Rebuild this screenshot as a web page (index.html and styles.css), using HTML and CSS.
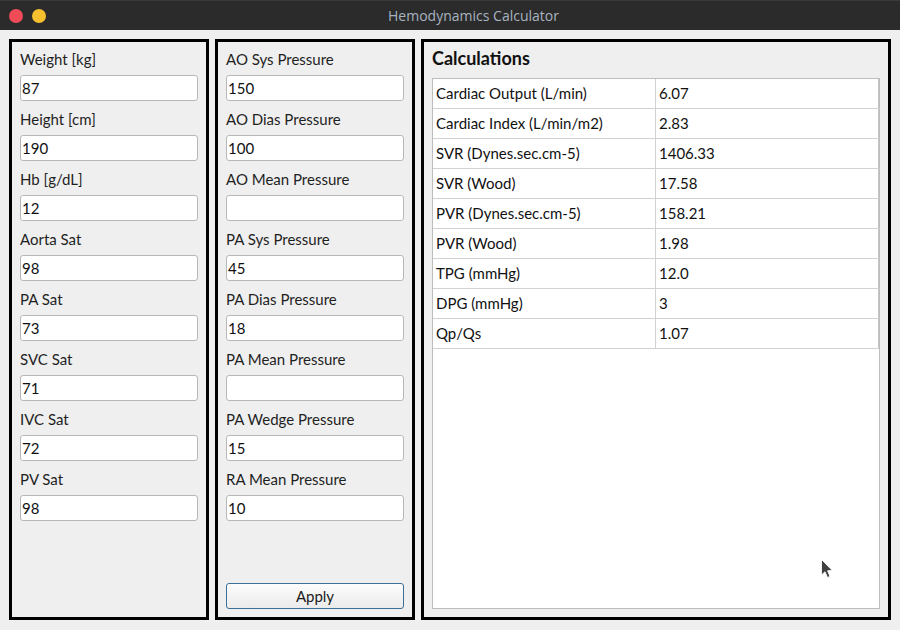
FILE: index.html
```html
<!DOCTYPE html>
<html>
<head>
<meta charset="utf-8">
<title>Hemodynamics Calculator</title>
<link rel="stylesheet" href="styles.css">
</head>
<body>
<div class="window">
  <div class="titlebar">
    <span class="dot red"></span>
    <span class="dot yellow"></span>
    <div class="title">Hemodynamics Calculator</div>
  </div>
  <div class="main">
    <div class="panel narrow">
      <div class="label">Weight [kg]</div><div class="input">87</div>
      <div class="label">Height [cm]</div><div class="input">190</div>
      <div class="label">Hb [g/dL]</div><div class="input">12</div>
      <div class="label">Aorta Sat</div><div class="input">98</div>
      <div class="label">PA Sat</div><div class="input">73</div>
      <div class="label">SVC Sat</div><div class="input">71</div>
      <div class="label">IVC Sat</div><div class="input">72</div>
      <div class="label">PV Sat</div><div class="input">98</div>
    </div>
    <div class="panel narrow">
      <div class="label">AO Sys Pressure</div><div class="input">150</div>
      <div class="label">AO Dias Pressure</div><div class="input">100</div>
      <div class="label">AO Mean Pressure</div><div class="input"></div>
      <div class="label">PA Sys Pressure</div><div class="input">45</div>
      <div class="label">PA Dias Pressure</div><div class="input">18</div>
      <div class="label">PA Mean Pressure</div><div class="input"></div>
      <div class="label">PA Wedge Pressure</div><div class="input">15</div>
      <div class="label">RA Mean Pressure</div><div class="input">10</div>
      <div class="button">Apply</div>
    </div>
    <div class="panel wide">
      <div class="heading">Calculations</div>
      <div class="table">
        <div class="row"><div class="cell">Cardiac Output (L/min)</div><div class="cell">6.07</div></div>
        <div class="row"><div class="cell">Cardiac Index (L/min/m2)</div><div class="cell">2.83</div></div>
        <div class="row"><div class="cell">SVR (Dynes.sec.cm-5)</div><div class="cell">1406.33</div></div>
        <div class="row"><div class="cell">SVR (Wood)</div><div class="cell">17.58</div></div>
        <div class="row"><div class="cell">PVR (Dynes.sec.cm-5)</div><div class="cell">158.21</div></div>
        <div class="row"><div class="cell">PVR (Wood)</div><div class="cell">1.98</div></div>
        <div class="row"><div class="cell">TPG (mmHg)</div><div class="cell">12.0</div></div>
        <div class="row"><div class="cell">DPG (mmHg)</div><div class="cell">3</div></div>
        <div class="row"><div class="cell">Qp/Qs</div><div class="cell">1.07</div></div>
      </div>
    </div>
  </div>
  <svg class="cursor" width="14" height="22" viewBox="0 0 14 22">
    <path d="M1.5 1.5 L1.5 17 L5 13.8 L7.5 19.5 L10 18.4 L7.6 12.8 L12.3 12.5 Z" fill="#404040" stroke="#f4f4f4" stroke-width="1" stroke-linejoin="round"/>
  </svg>
</div>
</body>
</html>
```

FILE: styles.css
```css
html, body {
  margin: 0;
  padding: 0;
}
body {
  width: 900px;
  height: 630px;
  overflow: hidden;
  background: #efefef;
  font-family: Lato, "Liberation Sans", sans-serif;
  font-size: 15px;
  color: #1a1a1a;
}
.window {
  position: relative;
  width: 900px;
  height: 630px;
}
.titlebar {
  height: 30px;
  box-sizing: border-box;
  background: #2b2b2b;
  border-top: 1px solid #3a3a3a;
  display: flex;
  align-items: center;
  padding-left: 9px;
  gap: 9px;
}
.dot {
  width: 14px;
  height: 14px;
  border-radius: 50%;
  flex: none;
}
.red { background: #f04b57; }
.yellow { background: #f6c02f; }
.title {
  flex: 1;
  text-align: center;
  margin-left: -8px;
  font-family: "Open Sans", "Noto Sans", sans-serif;
  font-size: 14px;
  color: #a8b3c0;
  line-height: 28px;
}
.main {
  display: flex;
  gap: 6px;
  padding: 9px 9px 10px 9px;
  height: 600px;
  box-sizing: border-box;
}
.panel {
  box-sizing: border-box;
  border: 3px solid #000;
  padding: 8px;
  display: flex;
  flex-direction: column;
}
.narrow { width: 200px; }
.wide { width: 470px; }
.label {
  height: 20px;
  line-height: 18px;
  margin-bottom: 5px;
  color: #1f1f1f;
}
.input {
  height: 26px;
  box-sizing: border-box;
  border: 1px solid #b8b8b8;
  border-radius: 3px;
  background: #fff;
  line-height: 24px;
  padding: 0 1px;
  margin-bottom: 9px;
  color: #111;
}
.button {
  margin-top: auto;
  height: 26px;
  box-sizing: border-box;
  border: 1px solid #3b6f98;
  border-radius: 3px;
  background: linear-gradient(#fcfcfc, #ebebeb);
  text-align: center;
  line-height: 24px;
  color: #1a1a1a;
}
.heading {
  font-weight: bold;
  font-size: 18px;
  line-height: 16px;
  height: 18px;
  margin-bottom: 10px;
  color: #111;
}
.table {
  flex: 1;
  border: 1px solid #bdbdbd;
  background: #fff;
}
.row {
  display: flex;
  height: 30px;
  box-sizing: border-box;
  border-bottom: 1px solid #d2d2d2;
}
.cell {
  width: 223px;
  box-sizing: border-box;
  border-right: 1px solid #d2d2d2;
  padding-left: 3px;
  line-height: 29px;
  color: #111;
}
.cell + .cell {
  border-right: 1px solid #c4c4c4;
}
.cursor {
  position: absolute;
  left: 820px;
  top: 558px;
}
```
